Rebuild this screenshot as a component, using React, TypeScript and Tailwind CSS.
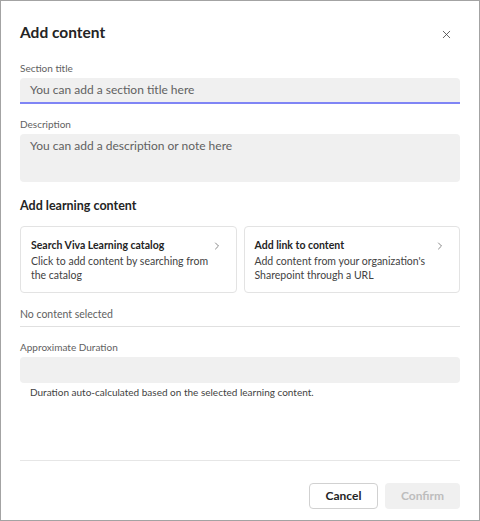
import { X, ChevronRight } from 'lucide-react'

const font = { fontFamily: 'Lato, "Open Sans", sans-serif' }

function OptionCard({ title, text }: { title: string; text: string }) {
  return (
    <button className="relative h-[67px] flex-1 rounded-[4px] border border-[#e3e3e3] bg-white pl-[10px] pr-[20px] pt-[11px] pb-[10px] text-left">
      <div className="text-[10.5px] font-bold leading-[14px] text-[#242424]">{title}</div>
      <div className="mt-[2px] text-[10.5px] leading-[14px] text-[#424242]">{text}</div>
      <ChevronRight className="absolute right-[13px] top-[13px] h-3 w-3 text-[#616161]" strokeWidth={1.5} />
    </button>
  )
}

export default function App() {
  return (
    <div className="h-[521px] w-[480px] bg-white" style={font}>
      <div className="flex h-full flex-col border border-[#a3a3a3] px-[19px]">
        {/* Header */}
        <div className="mt-[21px] flex items-center justify-between">
          <h1 className="text-[15.5px] font-bold leading-[20px] text-[#242424]">Add content</h1>
          <X className="mr-[7px] mt-[4px] h-[13px] w-[13px] text-[#424242]" strokeWidth={1.5} />
        </div>

        {/* Section title */}
        <label className="mt-[19px] text-[10px] leading-[14px] text-[#616161]">Section title</label>
        <div className="mt-[3px] flex h-[26px] items-center rounded-t-[4px] border-b-2 border-[#7f85f5] bg-[#f0f0f0] px-[10px]">
          <span className="text-[12px] text-[#616161]">You can add a section title here</span>
        </div>

        {/* Description */}
        <label className="mt-[13px] text-[10px] leading-[14px] text-[#616161]">Description</label>
        <div className="mt-[3px] h-[48px] rounded-[4px] bg-[#f0f0f0] px-[10px] pt-[4px]">
          <div className="text-[12px] leading-[16px] text-[#616161]">You can add a description or note here</div>
        </div>

        {/* Learning content */}
        <h2 className="mt-[16px] text-[12.5px] font-bold leading-[16px] text-[#242424]">Add learning content</h2>
        <div className="mt-[12px] flex gap-[7px]">
          <OptionCard
            title="Search Viva Learning catalog"
            text="Click to add content by searching from the catalog"
          />
          <OptionCard
            title="Add link to content"
            text="Add content from your organization's Sharepoint through a URL"
          />
        </div>

        <div className="mt-[14px] text-[10.5px] leading-[14px] text-[#616161]">No content selected</div>
        <div className="mt-[5px] h-px bg-[#e0e0e0]" />

        {/* Duration */}
        <label className="mt-[13px] text-[10px] leading-[14px] text-[#616161]">Approximate Duration</label>
        <div className="mt-[3px] h-[26px] rounded-[4px] bg-[#f0f0f0]" />
        <div className="mt-[2px] pl-[10px] text-[10px] leading-[14px] text-[#424242]">
          Duration auto-calculated based on the selected learning content.
        </div>

        <div className="mt-[61px] h-px bg-[#e6e6e6]" />

        {/* Footer */}
        <div className="mt-[22px] flex justify-end gap-[7px]">
          <button className="h-[26px] w-[69px] rounded-[4px] border border-[#d1d1d1] bg-white text-[12px] font-bold text-[#242424]">
            Cancel
          </button>
          <button className="h-[26px] w-[75px] rounded-[4px] bg-[#f0f0f0] text-[12px] font-bold text-[#bdbdbd]">
            Confirm
          </button>
        </div>
      </div>
    </div>
  )
}
